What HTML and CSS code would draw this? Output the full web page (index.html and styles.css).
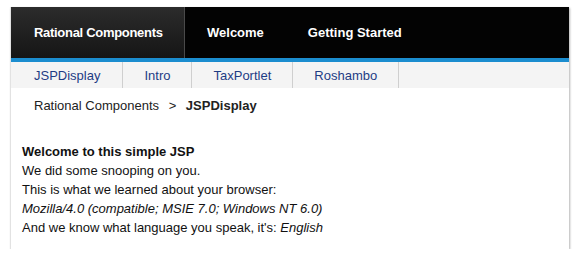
FILE: index.html
```html
<!DOCTYPE html>
<html lang="en">
<head>
<meta charset="UTF-8">
<title>JSPDisplay</title>
<link rel="stylesheet" href="styles.css">
</head>
<body>
    <div class="portal">
        <div class="topnav">
            <div class="top-tab active">Rational Components</div>
            <div class="top-tab">Welcome</div>
            <div class="top-tab">Getting Started</div>
        </div>
        <div class="subnav">
            <div class="sub-tab">JSPDisplay</div>
            <div class="sub-tab">Intro</div>
            <div class="sub-tab">TaxPortlet</div>
            <div class="sub-tab">Roshambo</div>
        </div>
        <div class="crumbs">
            Rational Components <span class="sep">&gt;</span> <b>JSPDisplay</b>
        </div>
        <div class="content">
            <b>Welcome to this simple JSP</b><br>
            We did some snooping on you.<br>
            This is what we learned about your browser:<br>
            <i>Mozilla/4.0 (compatible; MSIE 7.0; Windows NT 6.0)</i><br>
            And we know what language you speak, it's: <i>English</i>
        </div>
    </div>
</body>
</html>
```

FILE: styles.css
```css
body {
    margin: 0;
    background: #fff;
    font-family: 'Liberation Sans', Arial, sans-serif;
    font-size: 13px;
    color: #111;
}
.portal {
    margin: 7px 0 0 10px;
    width: 558px;
    height: 242px;
    border-left: 1px solid #e2e2e2;
    box-shadow: 1px 1px 2px #b5b5b5;
    background: #fff;
}
.topnav {
    display: flex;
    height: 51px;
    background: #030303;
    border-bottom: 4px solid #1b8dcf;
}
.top-tab {
    display: flex;
    align-items: center;
    padding: 0 22px;
    color: #fff;
    font-weight: bold;
    white-space: nowrap;
}
.top-tab.active {
    flex: none;
    box-sizing: border-box;
    width: 174px;
    padding: 0 0 0 23px;
    background: linear-gradient(#2c2c2c, #151515);
    border-right: 1px solid #4a4a4a;
    letter-spacing: -0.3px;
}
.subnav {
    display: flex;
    height: 26px;
    background: #f4f4f4;
}
.sub-tab {
    display: flex;
    align-items: center;
    padding: 0 21px;
    color: #1e3c84;
    border-right: 1px solid #cfcfcf;
}
.sub-tab:first-child {
    padding: 0 22px 0 23px;
}
.crumbs {
    padding: 10px 0 0 23px;
    height: 22px;
    color: #222;
}
.crumbs .sep {
    margin: 0 6px;
}
.content {
    padding: 22px 0 0 11px;
    line-height: 19px;
}
```
